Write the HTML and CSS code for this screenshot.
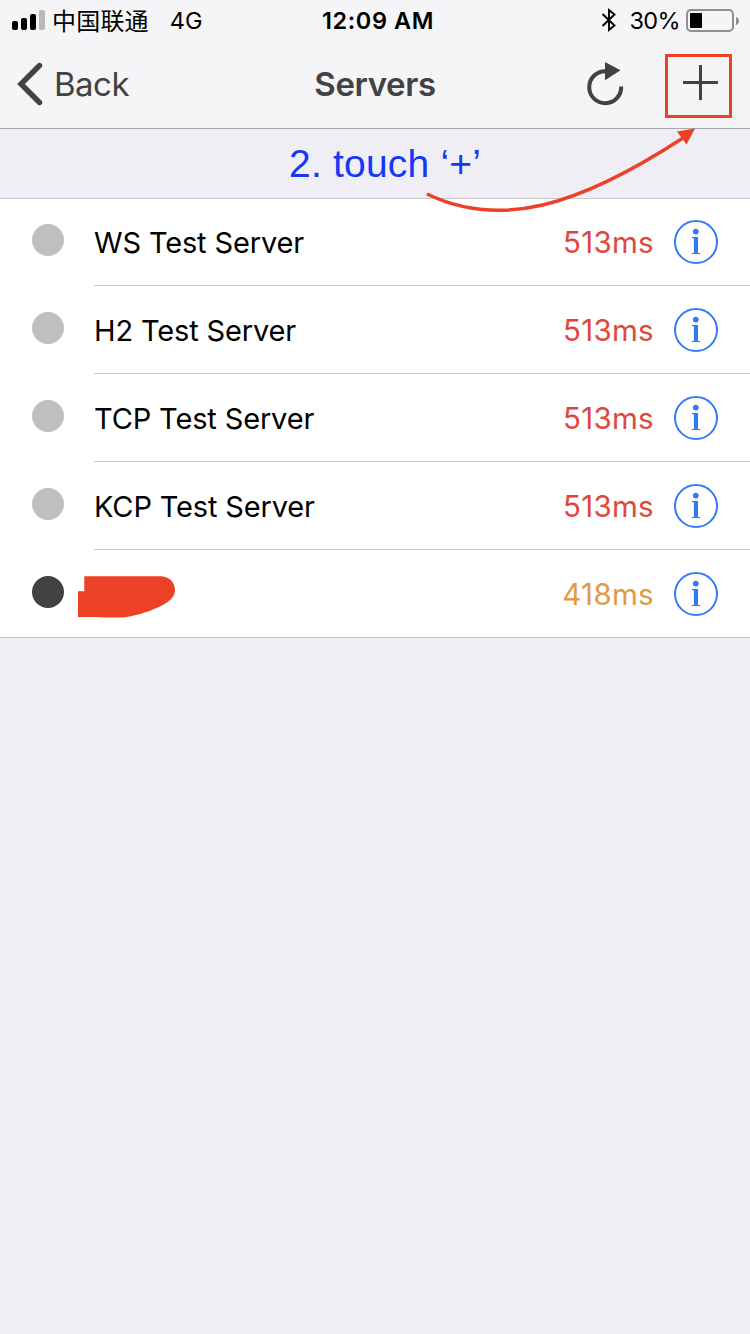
FILE: index.html
```
<!DOCTYPE html>
<html lang="en">
<head>
<meta charset="utf-8">
<title>Servers</title>
<link rel="stylesheet" href="styles.css">
</head>
<body>
<svg class="defs" width="0" height="0">
  <symbol id="info" viewBox="0 0 44 44">
    <circle cx="22" cy="22" r="21" fill="none" stroke="currentColor" stroke-width="2"/>
    <circle cx="21.800" cy="11.600" r="2.900" fill="currentColor"/>
    <path d="M18 16.900h6v16h2.200V34.100H17.800v-1.200h2.100V18.200H18z" fill="currentColor"/>
  </symbol>
</svg>
<div class="screen">
  <header class="header">
    <div class="status">
      <div class="status-left">
        <svg class="signal" width="34" height="22" viewBox="0 0 34 22">
          <rect x="0" y="11" width="6" height="9" rx="2"/>
          <rect x="9" y="8" width="6" height="12" rx="2"/>
          <rect x="18" y="4" width="6" height="16" rx="2"/>
          <rect x="27" y="0" width="6" height="20" rx="2" fill="#b9b9ba"/>
        </svg>
        <span class="carrier">中国联通</span>
        <span class="network">4G</span>
      </div>
      <div class="clock">12:09 AM</div>
      <div class="status-right">
        <svg class="bluetooth" width="16" height="24" viewBox="0 0 16 24">
          <path d="M1.500 6L13.500 17.500 8 22V2L13.500 6.500 1.500 18" fill="none" stroke="#000" stroke-width="1.900"/>
        </svg>
        <span class="percent">30%</span>
        <svg class="battery" width="54" height="24" viewBox="0 0 54 24">
          <rect x="1" y="1" width="46" height="21" rx="4" fill="none" stroke="#8f8f92" stroke-width="2"/>
          <rect x="4" y="4" width="12" height="15" rx="1"/>
          <path d="M50 8q3 1 3 4t-3 4z" fill="#8f8f92"/>
        </svg>
      </div>
    </div>
    <nav class="nav">
      <div class="back">
        <svg width="26" height="44" viewBox="0 0 26 44">
          <path d="M22.500 3.500L4 22l18.500 18.500" fill="none" stroke="#424242" stroke-width="5.400" stroke-linecap="round"/>
        </svg>
        <span class="back-text">Back</span>
      </div>
      <h1 class="title">Servers</h1>
      <div class="actions">
        <svg class="refresh" width="38" height="46" viewBox="0 0 38 46">
          <path d="M34.200 24.500A16 16 0 1 1 18.500 9.200" fill="none" stroke="#424242" stroke-width="4"/>
          <path d="M18 0l15.500 8.300L18 18.300z" fill="#424242"/>
        </svg>
        <div class="add">
          <svg width="36" height="36" viewBox="0 0 36 36"><path d="M0 17.500h35M17.500 0v35" stroke="#424242" stroke-width="3"/></svg>
        </div>
      </div>
    </nav>
  </header>
  <div class="hint"><span class="hint-text">2. touch ‘+’</span></div>
  <main class="list">
    <div class="row"><span class="dot"></span><div class="cell"><span class="name">WS Test Server</span><span class="ping">513ms</span><svg class="info"><use href="#info"/></svg></div></div>
    <div class="row"><span class="dot"></span><div class="cell"><span class="name">H2 Test Server</span><span class="ping">513ms</span><svg class="info"><use href="#info"/></svg></div></div>
    <div class="row"><span class="dot"></span><div class="cell"><span class="name">TCP Test Server</span><span class="ping">513ms</span><svg class="info"><use href="#info"/></svg></div></div>
    <div class="row"><span class="dot"></span><div class="cell"><span class="name">KCP Test Server</span><span class="ping">513ms</span><svg class="info"><use href="#info"/></svg></div></div>
    <div class="row"><span class="dot active"></span><div class="cell">
      <svg class="redaction" width="98" height="42" viewBox="0 0 98 42"><path d="M6.300 .3H82C91 .3 97 6.500 97 14C97 21 91 26 83 30C73 35 60 39 50 40.800C40 42.500 28 41 0 41V15.200H6.300z" fill="#ec4127"/></svg>
      <span class="ping slow">418ms</span><svg class="info"><use href="#info"/></svg></div></div>
  </main>
  <svg class="arrow" width="280" height="90" viewBox="420 125 280 90">
    <path d="M427 194C500 229 577 207 683 138" fill="none" stroke="#ec4127" stroke-width="3.400"/>
    <path d="M695 128.500L677 131.500 686.500 144.500z" fill="#ec4127"/>
  </svg>
</div>
</body>
</html>
```
FILE: styles.css
```
* { box-sizing: border-box; }
body { margin: 0; background: #efeef4; font-family: Inter, "Noto Sans CJK SC", sans-serif; color: #000; }
svg { display: block; flex: none; }
.defs { position: absolute; }
.screen { position: relative; width: 750px; height: 1334px; overflow: hidden; }
.header { height: 129px; background: #f5f5f7; border-bottom: 1px solid #a7a7aa; }
.status { display: grid; grid-template-columns: 1fr auto 1fr; height: 40px; font-size: 24px; line-height: 42px; white-space: nowrap; }
.status-left { display: flex; padding-left: 12px; }
.signal { margin-top: 10px; }
.carrier { font-family: "Noto Sans CJK SC", sans-serif; line-height: 40px; margin-left: 6px; letter-spacing: .2px; }
.network { margin-left: 21px; font-size: 23.5px; }
.clock { font-size: 23.5px; font-weight: 600; letter-spacing: .6px; margin-left: 6px; }
.status-right { display: flex; justify-content: flex-end; padding-right: 10px; }
.bluetooth { margin: 8px 12px 0 0; }
.percent { font-size: 23.5px; letter-spacing: -.6px; margin-right: 6px; }
.battery { margin-top: 9px; }
.nav { display: grid; grid-template-columns: 1fr auto 1fr; align-items: center; height: 88px; color: #424242; }
.back { display: flex; align-items: center; padding-left: 17px; }
.back-text { margin-left: 11px; font-size: 33px; letter-spacing: -.5px; }
.title { margin: 0; font-size: 33px; font-weight: 600; letter-spacing: -.4px; }
.actions { display: flex; justify-content: flex-end; align-items: center; padding-right: 18px; }
.refresh { margin: 2px 40px 0 0; }
.add { display: flex; justify-content: center; align-items: flex-start; width: 67px; height: 64px; padding: 8px 0 0 4px; border: 3px solid #ec4127; margin-top: 3px; }
.hint { height: 69px; padding-left: 289px; font: 39px/70px "Liberation Sans", Arial, sans-serif; letter-spacing: .2px; color: #1637f5; }
.list { background: #fff; border-top: 1px solid #c8c7cc; border-bottom: 1px solid #c8c7cc; }
.row { display: flex; height: 88px; padding-left: 32px; }
.row:first-child { height: 87px; }
.row:last-child { height: 87px; }
.dot { flex: none; width: 32px; height: 32px; margin-top: 26px; border-radius: 50%; background: #bfbfbf; }
.row:first-child .dot { margin-top: 25px; }
.dot.active { background: #424242; }
.cell { display: flex; flex: 1; align-items: center; margin-left: 30px; padding-right: 32px; border-bottom: 1px solid #c8c7cc; }
.row:last-child .cell { border-bottom: 0; }
.name { padding-top: 2px; font-size: 29px; line-height: 36px; letter-spacing: -.15px; white-space: nowrap; }
.row:first-child .name { padding-top: 1px; }
.ping { margin-left: auto; font-size: 29.5px; line-height: 36px; letter-spacing: .3px; color: #dc4840; }
.ping.slow { color: #e09a46; }
.info { width: 44px; height: 44px; margin-left: 20px; color: #347af6; }
.redaction { margin: 6px 0 0 -16px; }
.arrow { position: absolute; left: 420px; top: 125px; }
```
